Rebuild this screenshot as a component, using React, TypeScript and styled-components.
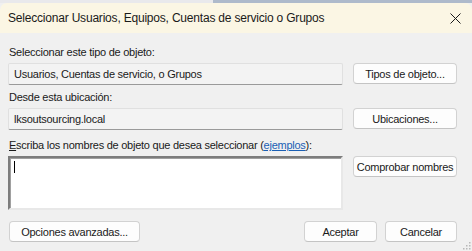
import { styled, createGlobalStyle } from 'styled-components';

const GlobalStyle = createGlobalStyle`
  html, body {
    margin: 0;
    padding: 0;
    background: #f0f0f0;
  }
  body {
    font-family: "Liberation Sans", Arial, sans-serif;
    font-size: 11px;
    letter-spacing: -0.25px;
    color: #1a1a1a;
  }
`;

const App = () => {
  return (
    <Screen>
      <GlobalStyle />
      <Backdrop>
        <BackdropPart $tone="#e9e9ec" $width="213px" />
        <BackdropPart $tone="#aebacb" $width="auto" />
      </Backdrop>
      <Window>
        <TitleBar>
          <Title>Seleccionar Usuarios, Equipos, Cuentas de servicio o Grupos</Title>
          <CloseButton aria-label="Cerrar">
            <svg width="11" height="11" viewBox="0 0 11 11">
              <path d="M0.5 0.5 L10.5 10.5 M10.5 0.5 L0.5 10.5" stroke="#1a1a1a" strokeWidth="1" />
            </svg>
          </CloseButton>
        </TitleBar>
        <Body>
          <Label>Seleccionar este tipo de objeto:</Label>
          <FieldRow>
            <ReadField>Usuarios, Cuentas de servicio, o Grupos</ReadField>
            <Button $width="104px">Tipos de objeto...</Button>
          </FieldRow>
          <Label>Desde esta ubicación:</Label>
          <FieldRow>
            <ReadField>lksoutsourcing.local</ReadField>
            <Button $width="104px">Ubicaciones...</Button>
          </FieldRow>
          <Label $spaced>
            <u>E</u>scriba los nombres de objeto que desea seleccionar (<HelpLink>ejemplos</HelpLink>):
          </Label>
          <FieldRow>
            <NamesBox>
              <Caret />
            </NamesBox>
            <Button $width="104px">Comprobar nombres</Button>
          </FieldRow>
          <Footer>
            <Button $width="131px">Opciones avanzadas...</Button>
            <Actions>
              <Button $width="73px">Aceptar</Button>
              <Button $width="72px">Cancelar</Button>
            </Actions>
          </Footer>
        </Body>
        <Grip>
          <svg width="10" height="10" viewBox="0 0 10 10">
            {[
              [8, 2], [8, 5], [5, 5], [8, 8], [5, 8], [2, 8],
            ].map(([x, y]) => (
              <rect key={`${x}-${y}`} x={x} y={y} width="1.5" height="1.5" fill="#b8b8b8" />
            ))}
          </svg>
        </Grip>
      </Window>
    </Screen>
  );
};

const Screen = styled.div`
  width: 472px;
  height: 251px;
  overflow: hidden;
  display: flex;
  flex-direction: column;
  background: #f0f0f0;
`;
const Backdrop = styled.div`
  display: flex;
  height: 3px;
  flex-shrink: 0;
`;
const BackdropPart = styled.div<{ $tone: string; $width: string }>`
  background: ${p => p.$tone};
  width: ${p => p.$width};
  flex: ${p => (p.$width === 'auto' ? 1 : 'none')};
`;
const Window = styled.div`
  position: relative;
  flex: 1;
  display: flex;
  flex-direction: column;
  background: #f0f0f0;
  border-radius: 7px 7px 0 0;
  overflow: hidden;
`;
const TitleBar = styled.div`
  display: flex;
  align-items: center;
  justify-content: space-between;
  height: 30px;
  padding: 0 11px 0 8px;
  background: #fbf6e4;
`;
const Title = styled.span`
  font-size: 12px;
  letter-spacing: -0.2px;
  color: #1a1a1a;
`;
const CloseButton = styled.span`
  display: flex;
  align-items: center;
  width: 11px;
  height: 11px;
`;
const Body = styled.div`
  display: flex;
  flex-direction: column;
  padding: 10px 15px 0 8px;
`;
const Label = styled.div<{ $spaced?: boolean }>`
  height: 18px;
  line-height: 18px;
  margin-top: ${p => (p.$spaced ? '3px' : '0')};
  padding-left: 1px;
  color: #1a1a1a;

  u {
    text-decoration: underline;
    text-underline-offset: 1px;
  }
`;
const HelpLink = styled.a`
  color: #1a5fb4;
  text-decoration: underline;
  text-underline-offset: 1px;
  cursor: pointer;
`;
const FieldRow = styled.div`
  display: grid;
  grid-template-columns: 1fr 104px;
  column-gap: 10px;
  align-items: start;
  margin: 2px 0 3px;
`;
const ReadField = styled.div`
  box-sizing: border-box;
  height: 22px;
  line-height: 20px;
  padding: 0 5px;
  background: #f3f3f3;
  border: 1px solid #e0e0e0;
  border-bottom-color: #9a9a9a;
  border-radius: 2px;
  color: #1a1a1a;
`;
const NamesBox = styled.div`
  box-sizing: border-box;
  height: 54px;
  padding: 3px 4px;
  background: #ffffff;
  border: 2px solid;
  border-color: #7d7d7d #e8e8e8 #e8e8e8 #7d7d7d;
  box-shadow: inset 1px 1px 0 #a0a0a0;
`;
const Caret = styled.div`
  width: 1px;
  height: 12px;
  background: #000;
`;
const Button = styled.button<{ $width: string }>`
  box-sizing: border-box;
  width: ${p => p.$width};
  height: 21px;
  padding: 0;
  font-family: inherit;
  font-size: 11px;
  letter-spacing: -0.25px;
  color: #1a1a1a;
  background: #fdfdfd;
  border: 1px solid #d2d2d2;
  border-bottom-color: #c4c4c4;
  border-radius: 4px;
`;
const Footer = styled.div`
  display: flex;
  justify-content: space-between;
  margin-top: 8px;
  padding-left: 1px;
`;
const Actions = styled.div`
  display: flex;
  gap: 8px;
`;
const Grip = styled.div`
  position: absolute;
  right: 1px;
  bottom: 1px;
  width: 10px;
  height: 10px;
`;

export default App;
